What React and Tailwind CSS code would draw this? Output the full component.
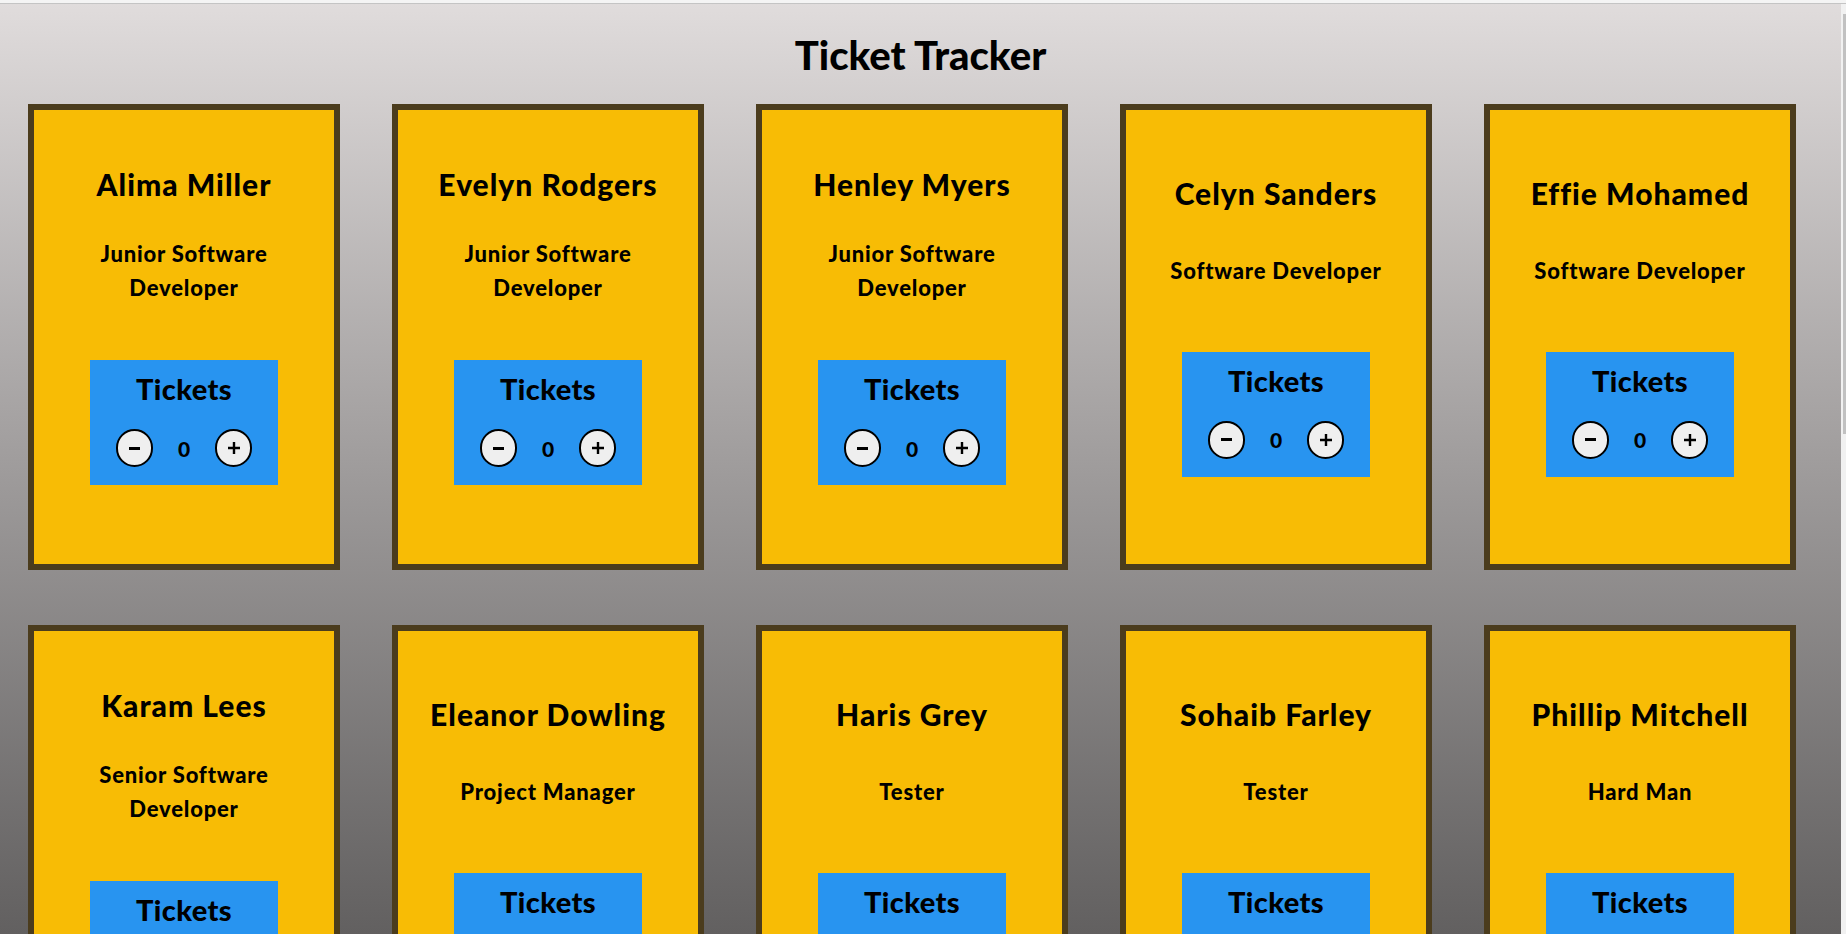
import React from "react";

const people = [
  { name: "Alima Miller", job: "Junior Software Developer" },
  { name: "Evelyn Rodgers", job: "Junior Software Developer" },
  { name: "Henley Myers", job: "Junior Software Developer" },
  { name: "Celyn Sanders", job: "Software Developer" },
  { name: "Effie Mohamed", job: "Software Developer" },
  { name: "Karam Lees", job: "Senior Software Developer" },
  { name: "Eleanor Dowling", job: "Project Manager" },
  { name: "Haris Grey", job: "Tester" },
  { name: "Sohaib Farley", job: "Tester" },
  { name: "Phillip Mitchell", job: "Hard Man" },
];

function Card({ name, job }) {
  return (
    <div className="w-[312px] h-[466px] shrink-0 border-[6px] border-[#4b3c1d] bg-[#f8bc05] flex flex-col items-center justify-evenly text-center text-black">
      <h2 className="mt-[21px] text-[30px] leading-[34px] font-black tracking-[1px] whitespace-nowrap">{name}</h2>
      <p className="mb-[19px] max-w-[250px] text-[22px] leading-[34px] font-black tracking-[0.8px]">{job}</p>
      <div className="mb-[43px] w-[188px] h-[125px] bg-[#2894f0] flex flex-col items-center pt-[12px]">
        <h3 className="text-[29px] leading-[34px] font-black tracking-[0.4px]">Tickets</h3>
        <div className="mt-[23px] flex items-center justify-center gap-[25px]">
          <button className="w-[37px] h-[38px] rounded-full border-2 border-black bg-[#efefef] flex items-center justify-center">
            <span className="block w-[11px] h-[3px] bg-black"></span>
          </button>
          <span className="text-[21px] leading-none font-black">0</span>
          <button className="w-[37px] h-[38px] rounded-full border-2 border-black bg-[#efefef] flex items-center justify-center">
            <svg width="14" height="14" viewBox="0 0 14 14">
              <path d="M7 1v12M1 7h12" stroke="#000" strokeWidth="2.4" />
            </svg>
          </button>
        </div>
      </div>
    </div>
  );
}

export default function App() {
  return (
    <div className="w-[1846px] h-[934px] overflow-hidden flex flex-col font-['Lato','Open_Sans',sans-serif]">
      <div className="h-[3px] bg-[#f4f4f4]"></div>
      <div className="h-px bg-[#c4c4c4]"></div>
      <div className="flex flex-1 min-h-0">
        <main className="w-[1841px] h-full overflow-hidden bg-linear-to-b from-[#e0dcdc] to-[#626060]">
          <h1 className="pt-[27px] text-center text-[40px] leading-[48px] font-black text-black">Ticket Tracker</h1>
          <div className="mt-[25px] pl-[28px] flex flex-wrap gap-x-[52px] gap-y-[55px]">
            {people.map((p) => (
              <Card key={p.name} name={p.name} job={p.job} />
            ))}
          </div>
        </main>
        <div className="w-[5px] bg-[#f1f1f1] pl-[2px] pt-[10px]">
          <div className="h-[420px] bg-[#c1c1c1]"></div>
        </div>
      </div>
    </div>
  );
}
